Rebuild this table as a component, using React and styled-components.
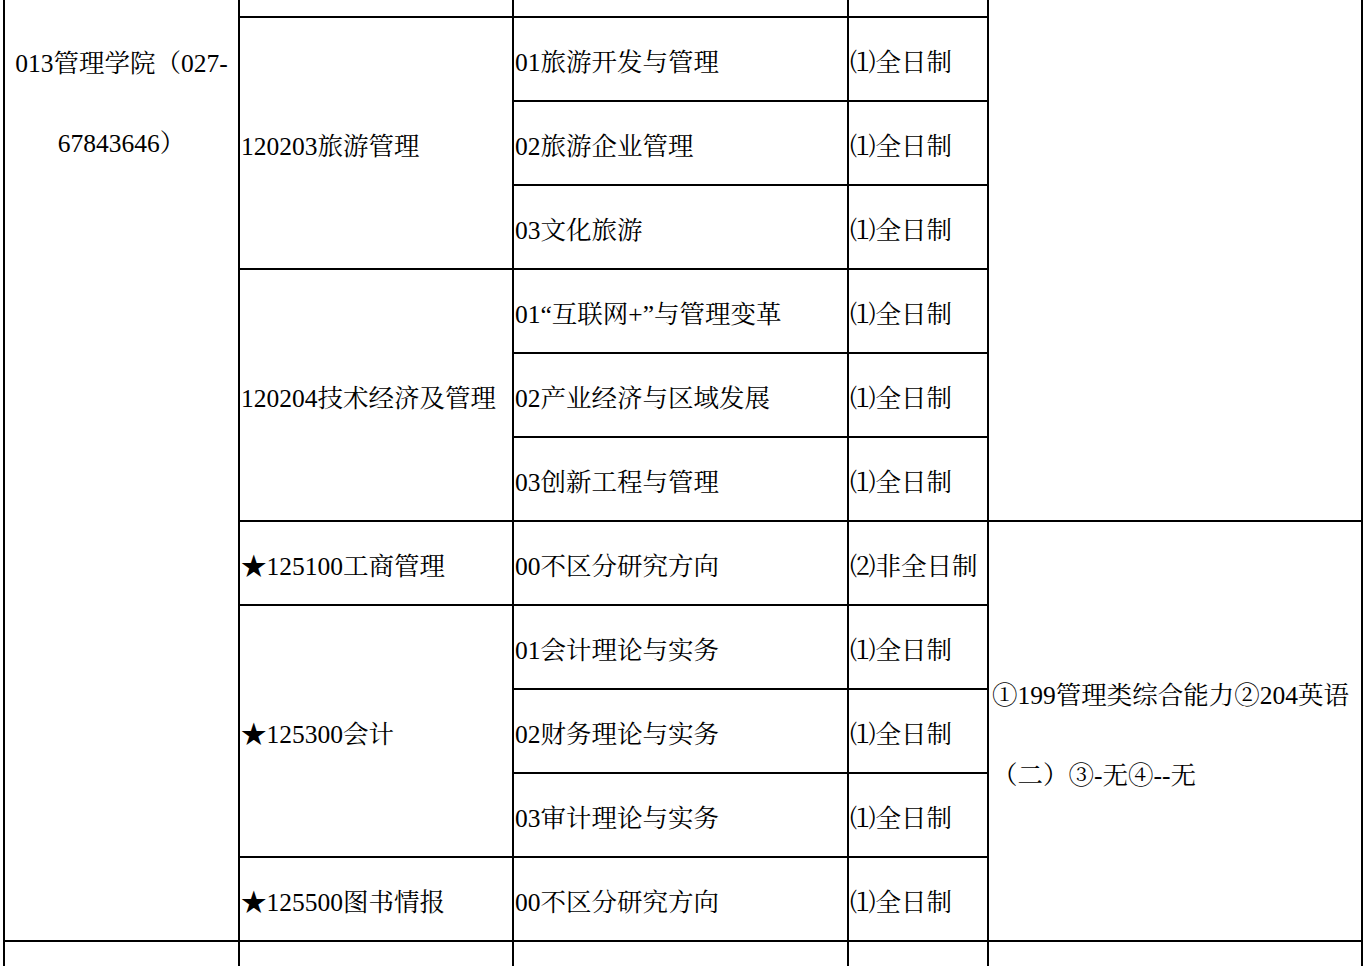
import React from 'react';
import styled, { createGlobalStyle } from 'styled-components';

const Global = createGlobalStyle`
  html, body { margin: 0; padding: 0; background: #fff; overflow: hidden; }
  body {
    font-family: "Liberation Serif", "Noto Serif CJK SC", "Source Han Serif SC", "Noto Sans CJK SC", serif;
  }
`;

const Viewport = styled.div`
  height: 966px;
  overflow: hidden;
  padding-left: 3px;
`;

const Sheet = styled.div`
  display: grid;
  box-sizing: border-box;
  width: 1360px;
  padding: 0 2px;
  gap: 2px;
  background: #000;
  grid-template-columns: 233px 272px 333px 138px 372px;
  grid-template-rows: 16px repeat(11, 82px) 40px;
  font-size: 25.5px;
  color: #000;
`;

const Cell = styled.div`
  grid-column: ${(p) => p.$col};
  grid-row: ${(p) => p.$row} / span ${(p) => p.$span || 1};
  background: #fff;
  display: flex;
  align-items: center;
  padding: 8px 0 0 1px;
  white-space: nowrap;
  line-height: 1;
  overflow: hidden;
`;

const CollegeCell = styled.div`
  grid-column: 1;
  grid-row: 1 / span 12;
  background: #fff;
  text-align: center;
  padding-top: 24px;
  line-height: 80px;
`;

const ExamCell = styled.div`
  grid-column: 5;
  grid-row: ${(p) => p.$row} / span ${(p) => p.$span};
  background: #fff;
  display: flex;
  align-items: center;
  padding: 9px 0 0 3px;
  line-height: 80px;
  white-space: nowrap;
`;

const Blank = styled.div`
  grid-column: ${(p) => p.$col};
  grid-row: ${(p) => p.$row} / span ${(p) => p.$span || 1};
  background: #fff;
`;

const majors = [
  {
    row: 2,
    name: '120203旅游管理',
    dirs: ['01旅游开发与管理', '02旅游企业管理', '03文化旅游'],
    mode: '⑴全日制',
  },
  {
    row: 5,
    name: '120204技术经济及管理',
    dirs: ['01“互联网+”与管理变革', '02产业经济与区域发展', '03创新工程与管理'],
    mode: '⑴全日制',
  },
  { row: 8, name: '★125100工商管理', dirs: ['00不区分研究方向'], mode: '⑵非全日制' },
  {
    row: 9,
    name: '★125300会计',
    dirs: ['01会计理论与实务', '02财务理论与实务', '03审计理论与实务'],
    mode: '⑴全日制',
  },
  { row: 12, name: '★125500图书情报', dirs: ['00不区分研究方向'], mode: '⑴全日制' },
];

export default function App() {
  return (
    <>
      <Global />
      <Viewport>
        <Sheet>
          <CollegeCell>
            013管理学院（027-
            <br />
            67843646）
          </CollegeCell>
          <Blank $col={2} $row={1} />
          <Blank $col={3} $row={1} />
          <Blank $col={4} $row={1} />
          <Blank $col={5} $row={1} $span={7} />
          {majors.map((m) => (
            <React.Fragment key={m.name}>
              <Cell $col={2} $row={m.row} $span={m.dirs.length}>
                {m.name}
              </Cell>
              {m.dirs.map((d, i) => (
                <React.Fragment key={d}>
                  <Cell $col={3} $row={m.row + i}>
                    {d}
                  </Cell>
                  <Cell $col={4} $row={m.row + i}>
                    {m.mode}
                  </Cell>
                </React.Fragment>
              ))}
            </React.Fragment>
          ))}
          <ExamCell $row={8} $span={5}>
            <div>
              ①199管理类综合能力②204英语
              <br />
              （二）③-无④--无
            </div>
          </ExamCell>
          {[1, 2, 3, 4, 5].map((c) => (
            <Blank key={c} $col={c} $row={13} />
          ))}
        </Sheet>
      </Viewport>
    </>
  );
}
